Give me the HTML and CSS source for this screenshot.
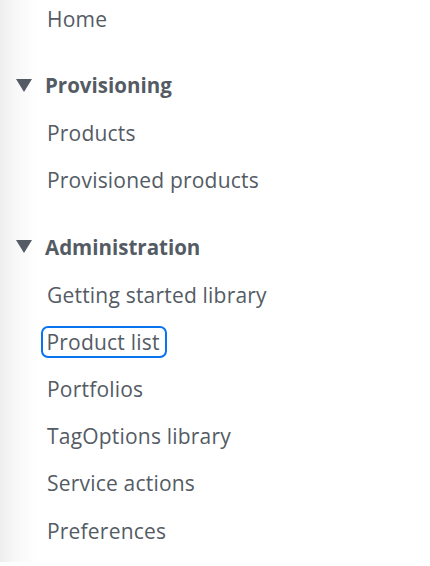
FILE: index.html
```html
<!DOCTYPE html>
<html lang="en">
<head>
<meta charset="utf-8">
<title>Service Catalog navigation</title>
<link rel="stylesheet" href="styles.css">
</head>
<body>
<nav class="side-nav">
  <ul class="nav-list top-list">
    <li class="nav-item"><a class="nav-link" href="#">Home</a></li>
  </ul>
  <section class="nav-section">
    <h2 class="section-title"><span class="caret" aria-hidden="true"><svg width="16" height="13" viewBox="0 0 16 13"><path d="M0 0 H16 L8 13 Z" fill="#545b64"/></svg></span>Provisioning</h2>
    <ul class="nav-list">
      <li class="nav-item"><a class="nav-link" href="#">Products</a></li>
      <li class="nav-item"><a class="nav-link" href="#">Provisioned products</a></li>
    </ul>
  </section>
  <section class="nav-section">
    <h2 class="section-title"><span class="caret" aria-hidden="true"><svg width="16" height="13" viewBox="0 0 16 13"><path d="M0 0 H16 L8 13 Z" fill="#545b64"/></svg></span>Administration</h2>
    <ul class="nav-list">
      <li class="nav-item"><a class="nav-link" href="#">Getting started library</a></li>
      <li class="nav-item"><a class="nav-link focused" href="#">Product list</a></li>
      <li class="nav-item"><a class="nav-link" href="#">Portfolios</a></li>
      <li class="nav-item"><a class="nav-link" href="#">TagOptions library</a></li>
      <li class="nav-item"><a class="nav-link" href="#">Service actions</a></li>
      <li class="nav-item"><a class="nav-link" href="#">Preferences</a></li>
    </ul>
  </section>
</nav>
</body>
</html>
```
FILE: styles.css
```css
html, body {
  margin: 0;
  padding: 0;
  background: #ffffff;
}
body {
  font-family: "Open Sans", "Noto Sans", sans-serif;
  color: #545b64;
  overflow: hidden;
}
.side-nav {
  min-height: 566px;
  background: linear-gradient(to right, #eeeeee 0px, #f7f7f7 14px, #ffffff 38px);
}
.nav-list {
  list-style: none;
  margin: 0;
  padding: 0;
}
.top-list {
  margin-top: -4px;
}
.nav-item {
  height: 47.2px;
  display: flex;
  align-items: center;
  padding-left: 41px;
}
.nav-link {
  font-size: 21px;
  line-height: 27px;
  letter-spacing: 0.2px;
  color: #545b64;
  text-decoration: none;
  padding: 0 4px;
  border: 2px solid transparent;
  border-radius: 7px;
}
.nav-link.focused {
  border: 2.5px solid #0a73f0;
  padding: 1px 5px 1px 3.5px;
  line-height: 26px;
}
.section-title {
  margin: 0;
  padding: 28px 0 11px 16px;
  height: 28px;
  display: flex;
  align-items: center;
  font-size: 20.5px;
  font-weight: 700;
  color: #545b64;
}
.caret {
  display: inline-flex;
  width: 29px;
}
```
